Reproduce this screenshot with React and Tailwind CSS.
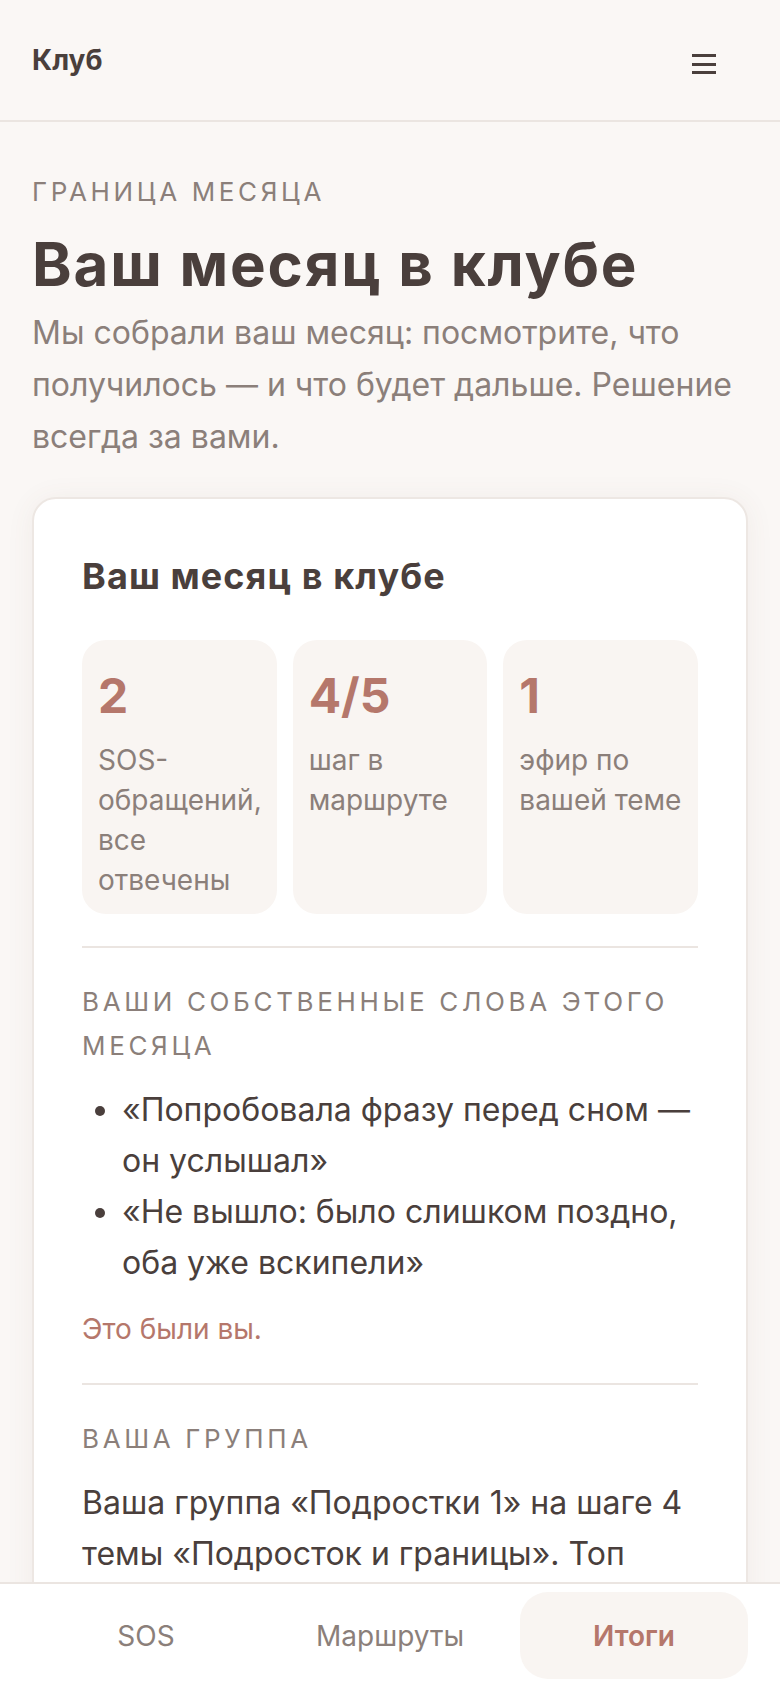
import React from 'react';

const stats = [
  { value: '2', label: 'SOS-обращений, все отвечены' },
  { value: '4/5', label: 'шаг в маршруте' },
  { value: '1', label: 'эфир по вашей теме' },
];

const quotes = [
  '«Попробовала фразу перед сном — он услышал»',
  '«Не вышло: было слишком поздно, оба уже вскипели»',
];

const tabs = [
  { label: 'SOS' },
  { label: 'Маршруты' },
  { label: 'Итоги', active: true },
];

const Eyebrow = ({ children, className = '' }) => (
  <p className={`text-[26px] leading-[44px] uppercase tracking-[0.14em] text-[#8b7f7a] ${className}`}>
    {children}
  </p>
);

const Divider = () => <div className="h-[2px] bg-[#ebe5e1]" />;

export default function App() {
  return (
    <div className="min-h-screen bg-[#faf7f5] font-[Inter,'Noto_Sans',sans-serif] text-[#4a3f3c]">
      {/* top bar */}
      <header className="h-[122px] border-b-2 border-[#ebe5e1] px-[32px] flex items-center justify-between">
        <span className="text-[28px] leading-[34px] font-bold">Клуб</span>
        <button className="mt-[8px] mr-[32px] flex flex-col gap-[5.5px]" aria-label="Меню">
          <span className="block w-[24px] h-[3px] bg-[#4a3f3c]" />
          <span className="block w-[24px] h-[3px] bg-[#4a3f3c]" />
          <span className="block w-[24px] h-[3px] bg-[#4a3f3c]" />
        </button>
      </header>

      <main className="px-[32px] pt-[48px] pb-[160px]">
        <Eyebrow>Граница месяца</Eyebrow>
        <h1 className="mt-[17px] text-[60px] leading-[66px] font-bold tracking-[0.03em]">
          Ваш месяц в клубе
        </h1>
        <p className="mt-[10px] text-[32px] leading-[52px] text-[#8b7f7a]">
          Мы собрали ваш месяц: посмотрите, что получилось — и что будет дальше. Решение всегда за вами.
        </p>

        <section className="mt-[34px] bg-white border-2 border-[#ede7e3] rounded-[24px] px-[48px] pt-[55px] pb-[48px] shadow-[0_2px_28px_rgba(120,90,75,0.07)]">
          <h2 className="text-[36px] leading-[45px] font-bold tracking-[0.03em]">Ваш месяц в клубе</h2>

          <div className="mt-[41px] grid grid-cols-3 gap-[16px]">
            {stats.map((s) => (
              <div key={s.value} className="bg-[#f9f5f2] rounded-[24px] px-[16px] pt-[32px] pb-[14px]">
                <div className="text-[48px] leading-none font-bold text-[#b5776b]">{s.value}</div>
                <div className="mt-[20px] text-[28px] leading-[40px] text-[#8b7f7a]">{s.label}</div>
              </div>
            ))}
          </div>

          <div className="mt-[32px]">
            <Divider />
          </div>

          <Eyebrow className="mt-[32px]">Ваши собственные слова этого месяца</Eyebrow>
          <ul className="mt-[16px] list-disc pl-[40px] text-[32px] leading-[51px]">
            {quotes.map((q) => (
              <li key={q} className="marker:text-[#4a3f3c]">{q}</li>
            ))}
          </ul>
          <p className="mt-[21px] text-[28px] leading-[40px] text-[#b5776b]">Это были вы.</p>

          <div className="mt-[34px]">
            <Divider />
          </div>

          <Eyebrow className="mt-[32px]">Ваша группа</Eyebrow>
          <p className="mt-[16px] text-[32px] leading-[51px]">
            Ваша группа «Подростки 1» на шаге 4 темы «Подросток и границы». Топ вопросов группы — как
            договариваться о телефоне и о времени возвращения домой.
          </p>
        </section>
      </main>

      {/* bottom tabs */}
      <nav className="fixed bottom-0 left-0 right-0 h-[106px] bg-white border-t-2 border-[#ebe5e1] px-[32px] pt-[8px] grid grid-cols-3 gap-[16px]">
        {tabs.map((t) => (
          <button
            key={t.label}
            className={`h-[87px] rounded-[28px] text-[28px] flex items-center justify-center ${
              t.active ? 'bg-[#f9f5f2] text-[#b5776b] font-semibold' : 'text-[#8b7f7a]'
            }`}
          >
            {t.label}
          </button>
        ))}
      </nav>
    </div>
  );
}
